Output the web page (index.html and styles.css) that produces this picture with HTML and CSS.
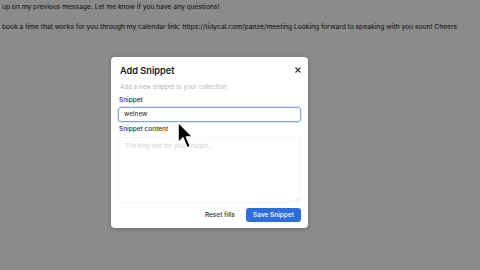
FILE: index.html
```html
<!DOCTYPE html>
<html>
<head>
<meta charset="utf-8">
<link rel="stylesheet" href="styles.css">
</head>
<body>
<div class="page">
  <p class="msg">up on my previous message. Let me know if you have any questions!</p>
  <p class="msg">book a time that works for you through my calendar link: https://tidycal.com/panze/meeting Looking forward to speaking with you soon! Cheers</p>
  <div class="modal">
    <div class="head">
      <h1 class="title">Add Snippet</h1>
      <svg class="close" width="6" height="6" viewBox="0 0 6 6"><path d="M0.5 0.5 L5.5 5.5 M5.5 0.5 L0.5 5.5" stroke="#333" stroke-width="1.1"/></svg>
    </div>
    <p class="sub">Add a new snippet to your collection</p>
    <label class="label">Snippet</label>
    <div class="input">welnew</div>
    <label class="label label2">Snippet content</label>
    <div class="textarea"><span class="ph">The long text for your snippet...</span>
      <svg class="grip" width="4" height="4" viewBox="0 0 4 4"><path d="M4 0 L0 4 M4 2 L2 4" stroke="#d0d0d0" stroke-width="0.6"/></svg>
    </div>
    <div class="actions">
      <span class="reset">Reset fills</span>
      <span class="save">Save Snippet</span>
    </div>
  </div>
  <svg class="cursor" width="18" height="30" viewBox="0 0 18 30">
    <path d="M1 1 L1 22 L6 17 L10 27 L13.5 25.5 L9.5 16 L16 16 Z" fill="#000" stroke="#fff" stroke-width="1.6" stroke-linejoin="round"/>
  </svg>
</div>
</body>
</html>
```
FILE: styles.css
```css
* { box-sizing: border-box; }
html, body { margin: 0; padding: 0; }
body {
  width: 480px;
  height: 270px;
  overflow: hidden;
  background: #8b8b8b;
  font-family: Inter, "Liberation Sans", sans-serif;
}
.page {
  position: relative;
  width: 480px;
  height: 270px;
  padding: 3px 0 0 2px;
}
.msg {
  margin: 0 0 11px 0;
  font-size: 6.65px;
  line-height: 9px;
  font-weight: 500;
  color: #1c1c1c;
  white-space: nowrap;
}
.modal {
  margin: 25px 0 0 109px;
  width: 197px;
  height: 171px;
  background: #fff;
  border-radius: 4px;
  box-shadow: 0 1px 4px rgba(0,0,0,0.25);
  padding: 6px 7px 0 7px;
  display: flex;
  flex-direction: column;
}
.head {
  display: flex;
  justify-content: space-between;
  align-items: center;
  height: 14px;
  padding: 0 0 0 2px;
}
.title {
  margin: 0;
  font-size: 9.2px;
  font-weight: 600;
  color: #1a1a1a;
}
.close { margin-right: 0; }
.sub {
  margin: 6px 0 0 2px;
  font-size: 6.2px;
  line-height: 8px;
  color: #b4b4b4;
}
.label {
  margin: 5px 0 0 1px;
  font-size: 6.5px;
  line-height: 9px;
  color: #333;
  font-weight: 500;
}
.label2 { margin-top: 3px; }
.input {
  margin-top: 2px;
  height: 15px;
  border: 1px solid #7ea6e8;
  border-radius: 3px;
  padding: 0 5px;
  font-size: 6.5px;
  line-height: 13px;
  color: #222;
  box-shadow: 0 0 0 1px rgba(120,160,230,0.25);
}
.textarea {
  position: relative;
  margin-top: 3px;
  height: 66px;
  border: 1px solid #f6f6f6;
  border-radius: 3px;
  padding: 4px 6px;
  font-size: 6px;
  line-height: 8px;
}
.ph { color: #d2d2d2; }
.grip { position: absolute; right: 1px; bottom: 1px; }
.actions {
  margin-top: 5px;
  display: flex;
  justify-content: flex-end;
  align-items: center;
  gap: 11px;
}
.reset {
  font-size: 6.5px;
  color: #333;
  font-weight: 500;
}
.save {
  height: 14px;
  width: 55px;
  background: #2e6ddc;
  border-radius: 3px;
  color: #fff;
  font-size: 6.5px;
  font-weight: 500;
  line-height: 14px;
  text-align: center;
}
.cursor {
  position: absolute;
  left: 177px;
  top: 121px;
}
```
